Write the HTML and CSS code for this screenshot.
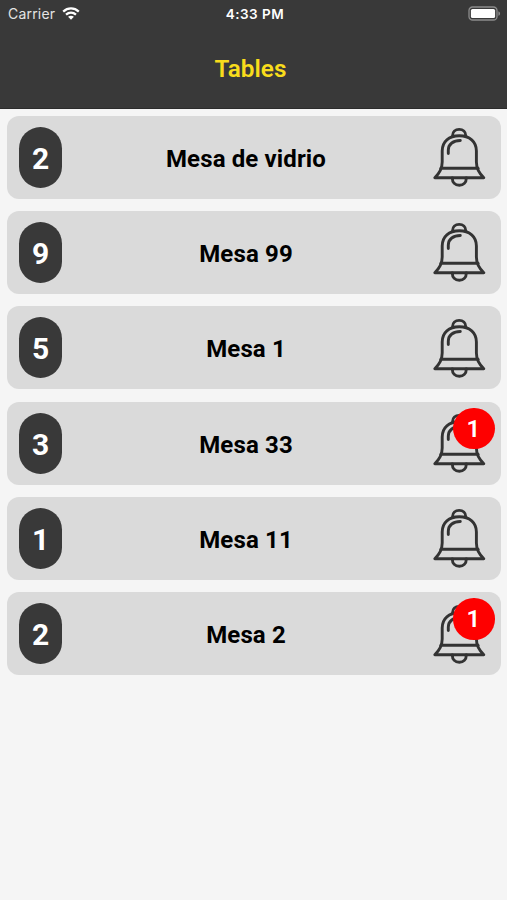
FILE: index.html
```
<!DOCTYPE html>
<html lang="en">
<head>
    <meta charset="UTF-8">
    <meta name="viewport" content="width=device-width, initial-scale=1.0">
    <title>Tables</title>
    <link rel="stylesheet" href="styles.css">
</head>
<body>
    <!-- Bell icon shared by all the tables -->
    <svg class="symbols" width="0" height="0">
        <symbol id="bell" viewBox="0 0 55 62">
            <path d="M20.6 9.5C20.6 5.7 23.3 3.4 27.2 3.4C31 3.4 33.7 5.7 33.7 9.5"/>
            <path d="M2.8 51.7C7.8 47 10.2 42 10.2 36V25C10.2 15.5 17 9.8 27.3 9.8C37.6 9.8 44.4 15.5 44.4 25V36C44.4 42 46.8 47 51.8 51.7Z"/>
            <path d="M9 42.2H46"/>
            <path d="M16.3 27.5V24C16.3 18 21.5 14.5 28.3 14.5"/>
            <path d="M20.3 52C20.3 56.5 23 59.2 27.3 59.2C31.6 59.2 34.3 56.5 34.3 52"/>
        </symbol>
    </svg>
    <header>
        <div class="status-bar">
            <div class="carrier">
                <span>Carrier</span>
                <svg class="wifi" viewBox="0 0 18 13">
                    <path d="M1.2 4.6C5.8 0.4 12.2 0.4 16.8 4.6"/>
                    <path d="M4 7.6C7 5 11 5 14 7.6"/>
                    <path class="dot" d="M6.1 9.7C7.8 8.3 10.2 8.3 11.9 9.7L9 12.7Z"/>
                </svg>
            </div>
            <span class="time">4:33 PM</span>
            <svg class="battery" viewBox="0 0 33 15">
                <rect class="shell" x="1" y="1" width="28" height="13" rx="3.6"/>
                <rect class="level" x="2.9" y="2.9" width="24.2" height="9.2" rx="1.6"/>
                <path class="tip" d="M30.4 5.2C32.6 6 32.6 9 30.4 9.8Z"/>
            </svg>
        </div>
        <h1>Tables</h1>
    </header>
    <main>
        <div class="table">
            <span class="number">2</span>
            <h2>Mesa de vidrio</h2>
            <div class="calls">
                <svg class="bell"><use href="#bell"/></svg>
            </div>
        </div>
        <div class="table">
            <span class="number">9</span>
            <h2>Mesa 99</h2>
            <div class="calls">
                <svg class="bell"><use href="#bell"/></svg>
            </div>
        </div>
        <div class="table">
            <span class="number">5</span>
            <h2>Mesa 1</h2>
            <div class="calls">
                <svg class="bell"><use href="#bell"/></svg>
            </div>
        </div>
        <div class="table">
            <span class="number">3</span>
            <h2>Mesa 33</h2>
            <div class="calls">
                <svg class="bell"><use href="#bell"/></svg>
                <span class="badge">1</span>
            </div>
        </div>
        <div class="table">
            <span class="number">1</span>
            <h2>Mesa 11</h2>
            <div class="calls">
                <svg class="bell"><use href="#bell"/></svg>
            </div>
        </div>
        <div class="table">
            <span class="number">2</span>
            <h2>Mesa 2</h2>
            <div class="calls">
                <svg class="bell"><use href="#bell"/></svg>
                <span class="badge">1</span>
            </div>
        </div>
    </main>
</body>
</html>
```

FILE: styles.css
```
* {
    box-sizing: border-box;
}

body {
    margin: 0;
    min-height: 100vh;
    background-color: #f5f5f5;
    font-family: Roboto, Arial, sans-serif;
}

.symbols {
    display: block;
}

header {
    height: 109.3px;
    background-color: #393939;
    border-bottom: 1px solid #2c2c2c;
    color: #fff;
}

.status-bar {
    display: grid;
    grid-template-columns: 1fr auto 1fr;
    align-items: center;
    height: 27px;
    padding: 0 6px 0 8px;
    font-family: Inter, sans-serif;
    font-size: 14px;
}

.carrier {
    display: flex;
    align-items: center;
    gap: 7px;
    color: #e4e4e4;
    letter-spacing: 0.2px;
}

.time {
    padding-left: 1px;
    font-size: 13.5px;
    font-weight: 600;
    letter-spacing: 0.5px;
}

.wifi {
    width: 18px;
    height: 13px;
    fill: none;
    stroke: #fff;
    stroke-width: 2.3;
}

.wifi .dot {
    fill: #fff;
    stroke: none;
}

.battery {
    justify-self: end;
    width: 33px;
    height: 15px;
}

.shell {
    fill: none;
    stroke: #8c8c8c;
    stroke-width: 1.3;
}

.level {
    fill: #fff;
}

.tip {
    fill: #8c8c8c;
}

h1 {
    margin: 0;
    padding-right: 6px;
    color: #f8dc1c;
    font-size: 24.3px;
    font-weight: 600;
    line-height: 84px;
    text-align: center;
}

main {
    display: flex;
    flex-direction: column;
    gap: 12.3px;
    padding: 6.4px 6px 0 7px;
}

.table {
    display: flex;
    align-items: center;
    height: 83px;
    padding: 0 14px 0 12px;
    background-color: #dadada;
    border-radius: 12px;
}

.number {
    width: 43px;
    height: 61px;
    border-radius: 21.5px;
    background-color: #393939;
    color: #fff;
    font-size: 30px;
    font-weight: 700;
    line-height: 64px;
    text-align: center;
}

h2 {
    flex: 1;
    margin: 0;
    padding: 3px 2px 0 0;
    color: #000;
    font-size: 24px;
    font-weight: 700;
    letter-spacing: 0.13px;
    text-align: center;
}

.calls {
    position: relative;
    width: 55px;
    height: 62px;
}

.bell {
    display: block;
    width: 55px;
    height: 62px;
    fill: none;
    stroke: #333;
    stroke-width: 2.9;
    stroke-linecap: round;
    stroke-linejoin: round;
}

.badge {
    position: absolute;
    top: -4.5px;
    right: -7.7px;
    width: 41.5px;
    height: 41.5px;
    border-radius: 50%;
    background-color: #fe0000;
    color: #fff;
    font-size: 24px;
    font-weight: 600;
    line-height: 43px;
    padding-right: 1px;
    text-align: center;
}
```
